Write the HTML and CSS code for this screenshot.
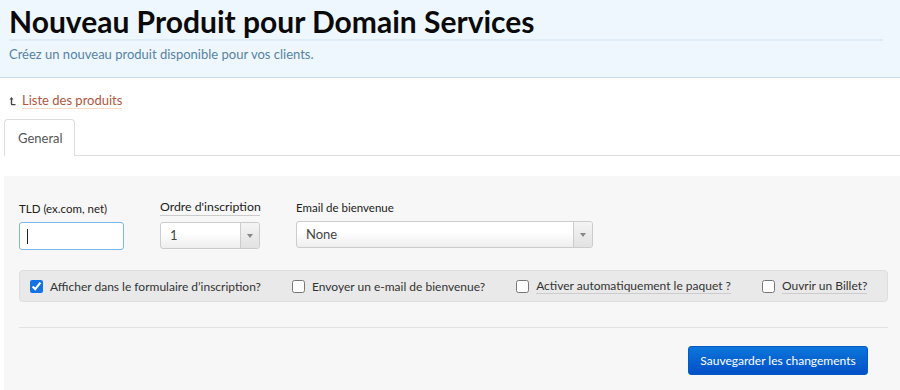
FILE: index.html
```html
<!DOCTYPE html>
<html lang="fr">
<head>
  <meta charset="UTF-8">
  <meta name="viewport" content="width=device-width, initial-scale=1.0">
  <title>Nouveau Produit pour Domain Services</title>
  <link rel="stylesheet" href="styles.css">
</head>
<body>
  <!-- Header -->
  <div class="page-header">
    <h1>Nouveau Produit pour Domain Services</h1>
    <p>Créez un nouveau produit disponible pour vos clients.</p>
  </div>

  <div class="content">
    <div class="back">
      <svg class="back-icon" width="7" height="10" viewBox="0 0 7 10">
        <path d="M2.5 1 L0.5 3.5 H1.8 V8 Q1.8 9.2 3 9.2 H6.5 V8 H3.4 Q3.2 8 3.2 7.8 V3.5 H4.5 Z" fill="#444"/>
      </svg>
      <a href="#">Liste des produits</a>
    </div>

    <!-- Tabs -->
    <ul class="tabs">
      <li class="active">General</li>
    </ul>

    <!-- Form -->
    <div class="panel">
      <div class="fields">
        <div class="field tld">
          <label>TLD (ex.com, net)</label>
          <div class="text-input"><span class="caret"></span></div>
        </div>
        <div class="field order">
          <label class="underlined">Ordre d'inscription</label>
          <div class="select">
            <span class="value">1</span>
            <span class="arrow"></span>
          </div>
        </div>
        <div class="field email">
          <label>Email de bienvenue</label>
          <div class="select">
            <span class="value">None</span>
            <span class="arrow"></span>
          </div>
        </div>
      </div>

      <div class="options">
        <label class="option"><input type="checkbox" checked> <span>Afficher dans le formulaire d’inscription?</span></label>
        <label class="option"><input type="checkbox"> <span>Envoyer un e-mail de bienvenue?</span></label>
        <label class="option"><input type="checkbox"> <span class="dotted">Activer automatiquement le paquet ?</span></label>
        <label class="option"><input type="checkbox"> <span class="dotted">Ouvrir un Billet?</span></label>
      </div>

      <hr>

      <div class="actions">
        <button class="btn-save">Sauvegarder les changements</button>
      </div>
    </div>
  </div>
</body>
</html>
```

FILE: styles.css
```css
/* General */
body {
  margin: 0;
  font-family: Lato, "Open Sans", Arial, sans-serif;
  color: #333;
  background: #fff;
  overflow: hidden;
}

/* Header */
.page-header {
  background: #eff7fe;
  border-bottom: 1px solid #c9dde9;
  padding: 3px 17px 15px 9px;
}
.page-header h1 {
  margin: 0;
  font-size: 30px;
  line-height: 36px;
  font-weight: 700;
  color: #0a0a0a;
  border-bottom: 2px solid #dfecf5;
}
.page-header p {
  margin: 5px 0 0;
  font-size: 13px;
  line-height: 16px;
  color: #5683a4;
}

/* Content */
.content {
  padding-left: 4px;
}
.back {
  margin-top: 14px;
  padding-left: 5px;
  font-size: 13px;
  line-height: 16px;
  display: flex;
  align-items: center;
  gap: 6px;
}
.back a {
  color: #b0563e;
  text-decoration: none;
  border-bottom: 1px solid #f6dcc4;
}

/* Tabs */
.tabs {
  list-style: none;
  margin: 10px 0 0;
  padding: 0;
  display: flex;
  border-bottom: 1px solid #ddd;
}
.tabs li {
  font-size: 13px;
  line-height: 16px;
  color: #555;
  padding: 10px 12px 10px 13px;
  border: 1px solid #ddd;
  border-bottom: none;
  border-radius: 4px 4px 0 0;
  margin-bottom: -1px;
  background: #fff;
  width: 44px;
}

/* Panel */
.panel {
  margin-top: 20px;
  background: #f7f7f7;
  padding: 24px 12px 20px 15px;
  min-height: 200px;
}
.fields {
  display: flex;
  align-items: flex-end;
  gap: 36px;
}
.field label {
  display: block;
  font-size: 11.5px;
  line-height: 14px;
  color: #222;
  margin-bottom: 6px;
  white-space: nowrap;
}
.field label.underlined {
  font-size: 12.3px;
  border-bottom: 1px solid #ccc;
  padding-bottom: 1px;
}
.tld { width: 105px; }
.order { width: 100px; }
.email { width: 297px; }

.text-input {
  height: 26px;
  background: #fff;
  border: 1px solid #7cb7ea;
  border-radius: 3px;
  display: flex;
  align-items: center;
  padding-left: 7px;
}
.caret {
  width: 1px;
  height: 15px;
  background: #222;
}

.select {
  height: 25px;
  display: flex;
  border: 1px solid #ccc;
  border-radius: 3px;
  background: linear-gradient(#fff 40%, #eee);
  margin-bottom: 1px;
}
.email .select {
  margin-bottom: 2px;
}
.select .value {
  flex: 1;
  font-size: 13px;
  line-height: 25px;
  color: #444;
  padding-left: 9px;
}
.select .arrow {
  width: 18px;
  border-left: 1px solid #ccc;
  display: flex;
  align-items: center;
  justify-content: center;
  background: linear-gradient(#f4f4f4, #e2e2e2);
  border-radius: 0 3px 3px 0;
}
.select .arrow::before {
  content: "";
  border-left: 3px solid transparent;
  border-right: 3px solid transparent;
  border-top: 4px solid #888;
}

/* Options bar */
.options {
  margin-top: 20px;
  background: #e9e9e9;
  border: 1px solid #dedede;
  border-radius: 4px;
  height: 30px;
  display: flex;
  align-items: center;
  padding-left: 10px;
  gap: 31px;
}
.option {
  display: flex;
  align-items: center;
  font-size: 12px;
  color: #333;
  gap: 7px;
}
.option input {
  width: 13px;
  height: 13px;
  margin: 0;
  accent-color: #1472e6;
}
.option .dotted {
  border-bottom: 1px solid #ccc;
}

hr {
  margin: 25px 0 0;
  border: none;
  border-top: 1px solid #e3e3e3;
}

.actions {
  display: flex;
  justify-content: flex-end;
  padding-right: 20px;
  margin-top: 18px;
}
.btn-save {
  font-family: Lato, Arial, sans-serif;
  font-size: 12px;
  color: #fff;
  background: linear-gradient(#0c76da, #0250c8);
  border: 1px solid #0a58c2;
  border-radius: 3px;
  width: 180px;
  height: 29px;
  cursor: pointer;
}
```
